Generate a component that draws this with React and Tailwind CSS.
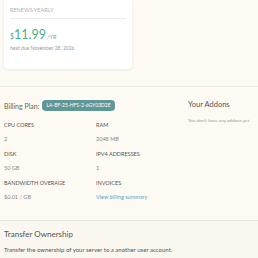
import React from 'react';

const Spec = ({ label, value, link }) => (
  <div className="flex flex-col gap-[7px]">
    <div className="text-[5.5px] leading-[7px] uppercase text-[#555]">{label}</div>
    <div className={`text-[5.5px] leading-[7px] ${link ? 'text-[#5aa5c8]' : 'text-[#888]'}`}>{value}</div>
  </div>
);

export default function App() {
  return (
    <div className="w-[258px] h-[258px] overflow-hidden bg-[#fdfaf3] font-['Lato',sans-serif]">
      {/* Renewal card */}
      <div className="mx-[4px] w-[128px] h-[69px] bg-white rounded-b-[4px] shadow-[0_1px_3px_rgba(0,0,0,0.08)] px-[6px] pt-[7px]">
        <div className="text-[5.5px] leading-[7px] uppercase text-[#b0b0b0] pb-[4px] border-b border-[#eeeeee]">Renews Yearly</div>
        <div className="mt-[9px] flex items-baseline text-[#4cae86]">
          <span className="text-[7px]">$</span>
          <span className="text-[12.5px] leading-[14px]">11.99</span>
          <span className="text-[5.5px] text-[#999] ml-[1px]">/YR</span>
        </div>
        <div className="mt-[3px] text-[5px] leading-[7px] text-[#999]">next due November 28, 2026</div>
      </div>

      {/* Billing section */}
      <div className="mt-[17px] border-t border-[#f0ece2] flex">
        <div className="w-[184px] pl-[4px] pt-[13px]">
          <div className="flex items-center gap-[3px]">
            <span className="text-[7px] leading-[10px] text-[#666]">Billing Plan:</span>
            <span className="bg-[#5f9696] text-white text-[5px] leading-[7px] rounded-[4px] px-[4px] py-[2px]">LA-BF-25-HFS-2-6GY03D2E</span>
          </div>
          <div className="mt-[11px] grid grid-cols-[92px_1fr] gap-y-[8px]">
            <Spec label="CPU Cores" value="2" />
            <Spec label="RAM" value="2048 MB" />
            <Spec label="Disk" value="50 GB" />
            <Spec label="IPv4 Addresses" value="1" />
            <Spec label="Bandwidth Overage" value="$0.01 / GB" />
            <Spec label="Invoices" value="View billing summary" link />
          </div>
        </div>
        <div className="pt-[13px] pl-[4px]">
          <div className="text-[7.5px] leading-[10px] text-[#555]">Your Addons</div>
          <div className="mt-[7px] text-[4.6px] leading-[7px] text-[#999] whitespace-nowrap">You don't have any addons yet.</div>
        </div>
      </div>

      {/* Transfer */}
      <div className="mt-[19px] border-t border-[#ebe6da] bg-[#faf7f0] h-[60px] pl-[4px] pt-[8px]">
        <div className="text-[8px] leading-[10px] text-[#555]">Transfer Ownership</div>
        <div className="mt-[7px] text-[6px] leading-[7px] text-[#555]">Transfer the ownership of your server to a another user account.</div>
      </div>
    </div>
  );
}
